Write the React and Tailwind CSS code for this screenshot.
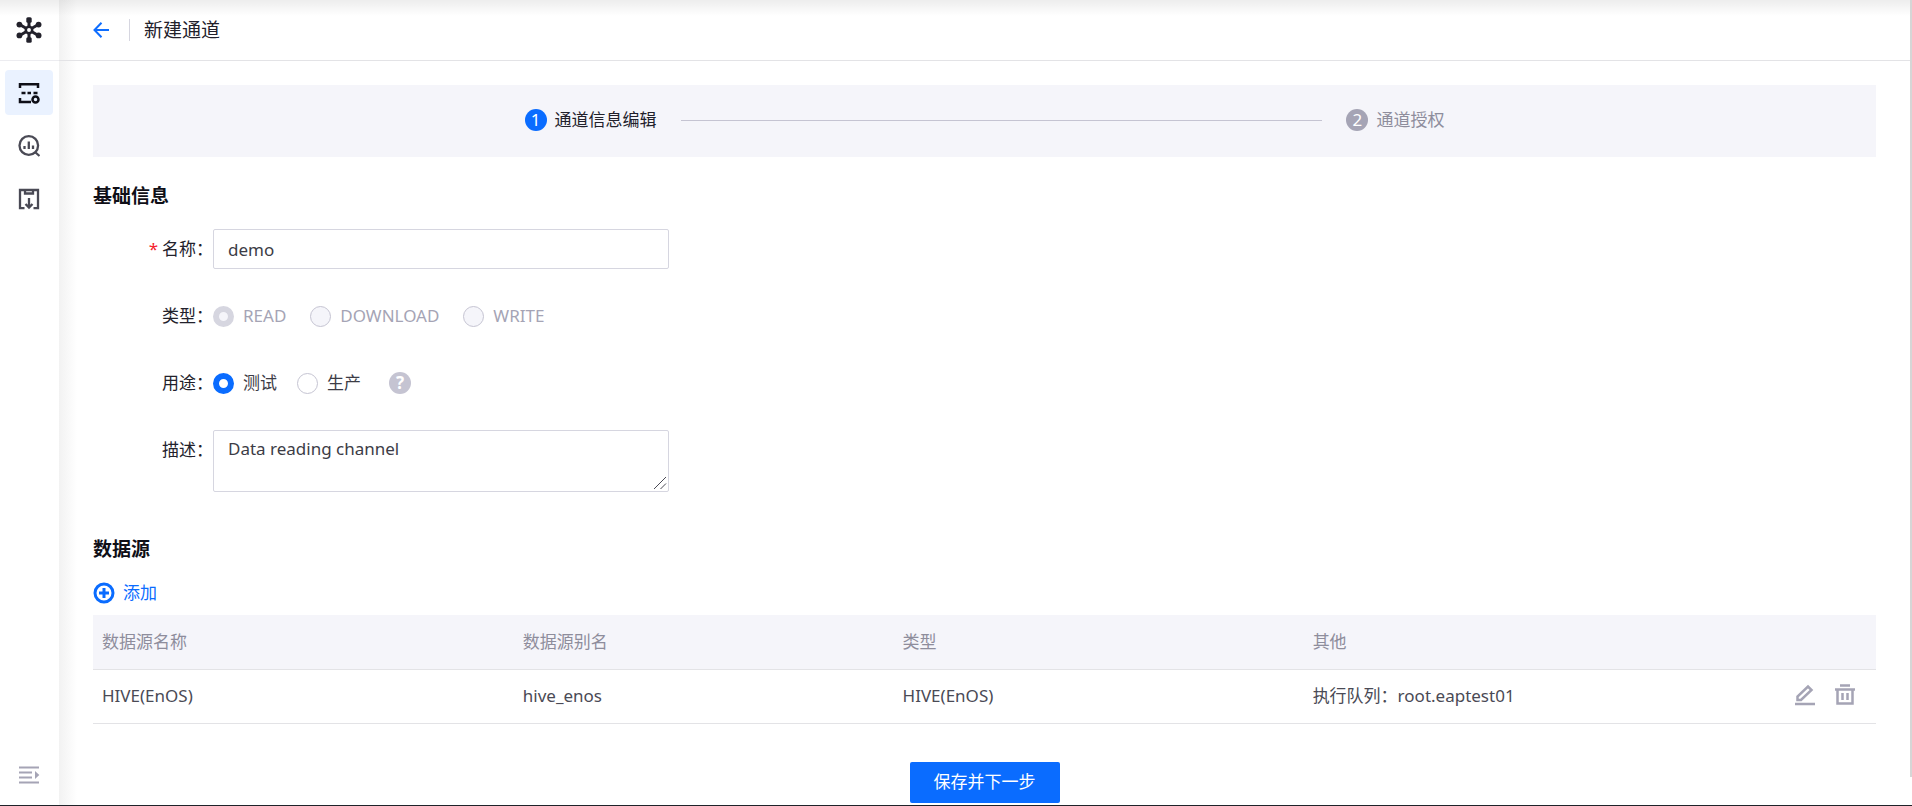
import React, { useState } from 'react';

const sources = [
  { name: 'HIVE(EnOS)', alias: 'hive_enos', type: 'HIVE(EnOS)', other: '执行队列：root.eaptest01' },
];

const LogoIcon = () => (
  <svg width="26" height="26" viewBox="0 0 26 26" fill="none" stroke="#22212b" strokeWidth="3">
    <path d="M13 3v7M13 16v7M4.500 8l6 3.500M15.500 14.500l6 3.500M21.500 8l-6 3.500M10.500 14.500l-6 3.500" />
    <circle cx="13" cy="13" r="3.200" strokeWidth="2.500" />
    <g fill="#22212b" stroke="none">
      <rect x="10.300" y="0.300" width="5.400" height="5.400" rx="1.500" />
      <rect x="10.300" y="20.300" width="5.400" height="5.400" rx="1.500" />
      <circle cx="3.400" cy="7.600" r="2.900" />
      <circle cx="22.600" cy="7.600" r="2.900" />
      <circle cx="3.400" cy="18.400" r="2.900" />
      <circle cx="22.600" cy="18.400" r="2.900" />
    </g>
  </svg>
);

const ChannelIcon = () => (
  <svg width="22" height="22" viewBox="0 0 22 22" fill="none" stroke="#0f0f17" strokeWidth="2.500">
    <path d="M2 6V2.200h18V6M2 16v4h11" />
    <path d="M3.500 11h4M9.500 11h3.500M15.500 11h4" />
    <circle cx="17.500" cy="17.500" r="3" />
  </svg>
);

const MonitorIcon = () => (
  <svg width="22" height="22" viewBox="0 0 22 22" fill="none" stroke="#4a4a55" strokeWidth="2.300">
    <circle cx="10.800" cy="10.500" r="9.300" />
    <path d="M17 17l4.500 4M6.500 11v3M10.800 6.500V14M15 10.500V14" />
  </svg>
);

const DownloadIcon = () => (
  <svg width="22" height="22" viewBox="0 0 22 22" fill="none" stroke="#4a4a55" strokeWidth="2.300">
    <path d="M6.500 20.200H2V2h18v18.200h-4.500M7 2v3.500h8V2M11 10v9M7.500 16l3.500 3.500 3.500-3.500" />
  </svg>
);

const ExpandIcon = () => (
  <svg width="22" height="20" viewBox="0 0 22 20" fill="none" stroke="#a5a4b5" strokeWidth="2.200">
    <path d="M1 2.500h20M1 7.500h13M1 12.500h13M1 17.500h20" />
    <path d="M17 6l4.300 4-4.300 4z" fill="#a5a4b5" stroke="none" />
  </svg>
);

const ArrowIcon = () => (
  <svg width="16" height="16" viewBox="0 0 16 16" fill="none" stroke="#0f6eff" strokeWidth="2">
    <path d="M8.500 0.800L1.500 8l7 7.200M1.500 8H16" />
  </svg>
);

const AddIcon = () => (
  <svg width="22" height="22" viewBox="0 0 22 22" fill="none" stroke="#0a6cff" strokeWidth="3">
    <circle cx="11" cy="11" r="9" />
    <path d="M11 6v10M6 11h10" />
  </svg>
);

const EditIcon = () => (
  <svg width="22" height="22" viewBox="0 0 22 22" fill="none" stroke="#a5a4b5" strokeWidth="2.500">
    <path d="M1 20h20M3.500 16v-3.500L14 2.500 17.500 6 7 16z" />
  </svg>
);

const TrashIcon = () => (
  <svg width="22" height="22" viewBox="0 0 22 22" fill="none" stroke="#a5a4b5" strokeWidth="2.500">
    <path d="M6 1.500h10M1 5.500h20M3.500 6v13.500h15V6M8.500 9v7M13.500 9v7" />
  </svg>
);

const GripIcon = () => (
  <svg width="14" height="14" viewBox="0 0 14 14" fill="none" stroke="#4a4a55">
    <path d="M1 13L13 1M7.500 13L13 7.500" />
  </svg>
);

const Field = ({ label, id, required, children }) => (
  <div className="flex items-start">
    <label htmlFor={id} className="w-[120px] shrink-0 text-right leading-10">
      {required && <span className="mr-1 text-[#f5222d]">*</span>}
      {label}：
    </label>
    {children}
  </div>
);

const Radio = ({ name, label, checked, disabled, onChange }) => (
  <label className={`flex items-center gap-[9px] ${disabled ? 'text-[#a5a4b5]' : 'text-[#3c3c46]'}`}>
    <input
      type="radio"
      name={name}
      checked={checked}
      disabled={disabled}
      onChange={onChange}
      className="m-0 size-[21px] appearance-none rounded-full border border-[#c5c4d2] bg-white checked:border-[6px] checked:border-[#0a6cff] disabled:bg-[#f5f5fa] disabled:checked:border-[#d6d6e0]"
    />
    {label}
  </label>
);

const Sidebar = () => (
  <aside className="flex w-[59px] shrink-0 flex-col items-center">
    <div className="flex h-[61px] w-full items-center justify-center border-b border-[#ececf0] pr-0.5">
      <LogoIcon />
    </div>
    <nav className="flex flex-col gap-2 pt-[9px] pr-px">
      <button aria-label="通道" className="flex h-[45px] w-12 items-center justify-center rounded-sm bg-[#eaf2ff]">
        <ChannelIcon />
      </button>
      <button aria-label="监控" className="flex h-[45px] w-12 items-center justify-center rounded-sm">
        <MonitorIcon />
      </button>
      <button aria-label="下载" className="flex h-[45px] w-12 items-center justify-center rounded-sm">
        <DownloadIcon />
      </button>
    </nav>
    <button aria-label="展开" className="mt-auto mb-5 pr-px">
      <ExpandIcon />
    </button>
  </aside>
);

const Steps = () => (
  <ol className="flex h-[72px] items-center justify-center bg-[#f5f5fa] pb-0.5">
    <li className="flex items-center gap-2 text-[#22212b]">
      <span className="flex size-[22px] items-center justify-center rounded-full bg-[#0a6cff] text-[17px] text-white">1</span>
      通道信息编辑
    </li>
    <li aria-hidden="true" className="mx-6 h-px w-[36%] bg-[#c5c4d2]" />
    <li className="flex items-center gap-2 text-[#8e8d9c]">
      <span className="flex size-[22px] items-center justify-center rounded-full bg-[#a5a4b5] text-[17px] text-white">2</span>
      通道授权
    </li>
  </ol>
);

const App = () => {
  const [name, setName] = useState('demo');
  const [usage, setUsage] = useState('测试');
  const [description, setDescription] = useState('Data reading channel');

  return (
    <div className="relative flex min-h-screen border-b border-[#1f2329] bg-white font-['Noto_Sans','Noto_Sans_CJK_SC',sans-serif] text-[17px] leading-6 text-[#22212b]">
      <Sidebar />

      <div className="flex min-w-0 flex-1 flex-col bg-linear-to-r from-[#f2f2f2] to-white to-[18px]">
        <header className="flex h-[61px] items-center border-b border-[#e3e3e6] pl-[34px]">
          <button aria-label="返回" className="pr-5">
            <ArrowIcon />
          </button>
          <h1 className="flex items-center gap-3.5 text-[19px]">
            <span className="h-[22px] w-px bg-[#d6d6e0]" />
            新建通道
          </h1>
        </header>

        <main className="pt-6 pr-9 pl-[34px]">
          <Steps />

          <h2 className="mt-[25px] text-[19px] leading-7 font-bold text-[#0f0f17]">基础信息</h2>
          <form className="mt-[19px] flex flex-col gap-[27px]">
            <Field label="名称" id="name" required>
              <input
                id="name"
                type="text"
                value={name}
                onChange={(e) => setName(e.target.value)}
                className="h-10 w-[456px] rounded-xs border border-[#d6d6e0] px-3.5 text-[#3c3c46] outline-none"
              />
            </Field>
            <Field label="类型">
              <div className="flex h-10 items-center gap-6">
                <Radio name="type" label="READ" checked disabled />
                <Radio name="type" label="DOWNLOAD" checked={false} disabled />
                <Radio name="type" label="WRITE" checked={false} disabled />
              </div>
            </Field>
            <Field label="用途">
              <div className="flex h-10 items-center gap-5">
                <Radio name="usage" label="测试" checked={usage === '测试'} onChange={() => setUsage('测试')} />
                <Radio name="usage" label="生产" checked={usage === '生产'} onChange={() => setUsage('生产')} />
                <span className="ml-2 flex size-[22px] items-center justify-center rounded-full bg-[#c5c4d2] text-[17px] font-bold text-white">?</span>
              </div>
            </Field>
            <Field label="描述" id="description">
              <div className="relative">
                <textarea
                  id="description"
                  value={description}
                  onChange={(e) => setDescription(e.target.value)}
                  className="block h-[62px] w-[456px] resize-none rounded-xs border border-[#d6d6e0] px-3.5 py-1.5 text-[#3c3c46] outline-none"
                />
                <span className="pointer-events-none absolute right-0.5 bottom-0.5">
                  <GripIcon />
                </span>
              </div>
            </Field>
          </form>

          <h2 className="mt-[43px] text-[19px] leading-7 font-bold text-[#0f0f17]">数据源</h2>
          <button className="mt-[18px] flex items-center gap-2 text-[#0a6cff]">
            <AddIcon />
            添加
          </button>

          <table className="mt-2.5 w-full table-fixed text-left">
            <thead className="bg-[#f5f5fa] text-[#8e8d9c]">
              <tr className="h-[54px] border-b border-[#e3e3e6]">
                <th className="w-[23.6%] pl-[9px] font-normal">数据源名称</th>
                <th className="w-[21.3%] pl-[9px] font-normal">数据源别名</th>
                <th className="w-[23%] pl-[9px] font-normal">类型</th>
                <th className="pl-[9px] font-normal">其他</th>
                <th className="w-[100px]" />
              </tr>
            </thead>
            <tbody className="text-[#4a4a55]">
              {sources.map((source) => (
                <tr key={source.alias} className="h-[54px] border-b border-[#e3e3e6]">
                  <td className="pl-[9px]">{source.name}</td>
                  <td className="pl-[9px]">{source.alias}</td>
                  <td className="pl-[9px]">{source.type}</td>
                  <td className="pl-[9px]">{source.other}</td>
                  <td>
                    <div className="flex justify-end gap-[18px] pr-5 pb-0.5">
                      <button aria-label="编辑"><EditIcon /></button>
                      <button aria-label="删除"><TrashIcon /></button>
                    </div>
                  </td>
                </tr>
              ))}
            </tbody>
          </table>

          <div className="flex justify-center pt-[38px] pb-0.5">
            <button className="h-[41px] rounded-xs bg-[#0a6cff] px-6 text-white">保存并下一步</button>
          </div>
        </main>
      </div>

      {/* shade under the top bar and the page scroll thumb */}
      <div className="pointer-events-none absolute inset-x-0 top-0 h-4 bg-linear-to-b from-black/7 to-transparent" />
      <div className="absolute top-0 right-0 bottom-7 w-0.5 bg-[#d6d6d6]" />
    </div>
  );
};

export default App;
